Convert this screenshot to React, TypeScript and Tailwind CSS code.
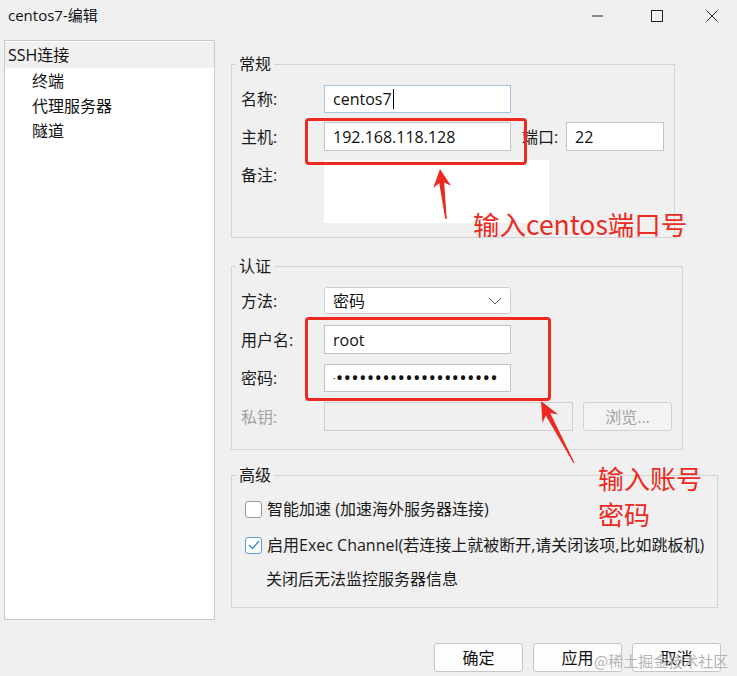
import React from "react";

const font = "font-['Open_Sans','Noto_Sans_CJK_SC',sans-serif]";

function Row({ label, children, className = "", dim = false }: { label: string; children: React.ReactNode; className?: string; dim?: boolean }) {
  return (
    <div className={`flex items-center ${className}`}>
      <div className={`w-[83px] shrink-0 ${dim ? "text-[#a3a3a3]" : "text-[#1a1a1a]"}`}>{label}</div>
      {children}
    </div>
  );
}

function Group({ title, className = "", children }: { title: string; className?: string; children: React.ReactNode }) {
  return (
    <fieldset className={`border border-[#d3d3d3] ${className}`}>
      <legend className="ml-[4px] px-[3px] leading-[20px] text-[#1a1a1a]">{title}</legend>
      {children}
    </fieldset>
  );
}

export default function App() {
  const dots = "•".repeat(21);
  return (
    <div className={`relative h-[676px] w-[737px] overflow-hidden bg-[#f0f0f0] text-[16px] ${font}`}>
      {/* 标题栏 */}
      <div className="flex h-[31px] items-center">
        <div className="pl-[8px] text-[15px] text-[#111]">centos7-编辑</div>
        <div className="ml-auto flex h-full items-center">
          <div className="flex w-[60px] justify-center">
            <svg width="11" height="11" viewBox="0 0 11 11"><path d="M0 6h11" stroke="#222" strokeWidth="1" /></svg>
          </div>
          <div className="flex w-[60px] justify-center">
            <svg width="12" height="12" viewBox="0 0 12 12"><rect x="0.5" y="0.5" width="11" height="11" fill="none" stroke="#222" /></svg>
          </div>
          <div className="flex w-[50px] justify-center">
            <svg width="12" height="12" viewBox="0 0 12 12"><path d="M0.5 0.5L11.5 11.5M11.5 0.5L0.5 11.5" stroke="#222" strokeWidth="1" /></svg>
          </div>
        </div>
      </div>

      <div className="flex pl-[4px] pt-[9px]">
        {/* 左侧树 */}
        <div className="h-[580px] w-[211px] border border-[#c9c9c9] bg-white pt-[1px]">
          <div className="flex h-[26px] items-center bg-[#f0f0f0] pl-[3px] text-[#111]">SSH连接</div>
          {["终端", "代理服务器", "隧道"].map((t) => (
            <div key={t} className="flex h-[25px] items-center pl-[27px] text-[#111]">{t}</div>
          ))}
        </div>

        {/* 右侧表单 */}
        <div className="ml-[16px] flex w-[490px] flex-col">
          <Group title="常规" className="mt-[14px] w-[444px]">
            <div className="pb-[14px] pl-[9px] pt-[11px]">
              <Row label="名称:">
                <div className="flex h-[28px] w-[187px] items-center border border-[#a9c3de] bg-white px-[8px] text-[#111]">
                  centos7<span className="ml-[1px] h-[20px] w-px bg-black" />
                </div>
              </Row>
              <Row label="主机:" className="mt-[9px]">
                <div className="flex h-[29px] w-[187px] items-center border border-[#c4c4c4] bg-white px-[8px] text-[#111]">192.168.118.128</div>
                <div className="ml-[11px] w-[44px] text-[#1a1a1a]">端口:</div>
                <div className="flex h-[29px] w-[98px] items-center border border-[#c4c4c4] bg-white px-[8px] text-[#111]">22</div>
              </Row>
              <div className="mt-[9px] flex">
                <div className="mt-[3px] w-[83px] text-[#1a1a1a]">备注:</div>
                <div className="h-[63px] w-[225px] bg-white" />
              </div>
            </div>
          </Group>

          <Group title="认证" className="mt-[18px] w-[452px]">
            <div className="pb-[18px] pl-[9px] pt-[11px]">
              <Row label="方法:">
                <div className="flex h-[27px] w-[187px] items-center justify-between rounded-[3px] border border-[#cdcdcd] bg-white pl-[8px] pr-[8px] text-[#111]">
                  密码
                  <svg width="14" height="8" viewBox="0 0 14 8"><path d="M1 1l6 6 6-6" fill="none" stroke="#555" strokeWidth="1" /></svg>
                </div>
              </Row>
              <Row label="用户名:" className="mt-[11px]">
                <div className="flex h-[29px] w-[187px] items-center border border-[#c4c4c4] bg-white px-[8px] text-[#111]">root</div>
              </Row>
              <Row label="密码:" className="mt-[10px]">
                <div className="flex h-[28px] w-[187px] items-center overflow-hidden whitespace-nowrap border border-[#c4c4c4] bg-white pl-[8px] text-[20px] leading-none tracking-[0.2px] text-[#111]">
                  <span className="text-[10px]">·</span>{dots}
                </div>
              </Row>
              <Row label="私钥:" className="mt-[10px]" dim>
                <div className="h-[29px] w-[249px] border border-[#cfcfcf] bg-[#f0f0f0]" />
                <div className="ml-[10px] flex h-[29px] w-[89px] items-center justify-center rounded-[3px] border border-[#d2d2d2] bg-[#f3f3f3] text-[#a3a3a3]">浏览...</div>
              </Row>
            </div>
          </Group>

          <Group title="高级" className="mt-[15px] w-[487px]">
            <div className="pb-[16px] pl-[13px] pt-[12px] text-[#1a1a1a]">
              <div className="flex h-[24px] items-center">
                <div className="h-[17px] w-[17px] rounded-[3px] border border-[#9a9a9a] bg-white" />
                <span className="ml-[5px]">智能加速 (加速海外服务器连接)</span>
              </div>
              <div className="mt-[12px] flex h-[24px] items-center">
                <div className="flex h-[17px] w-[17px] items-center justify-center rounded-[3px] border border-[#5f9ad6] bg-white">
                  <svg width="12" height="10" viewBox="0 0 12 10"><path d="M1 5l3.5 3.5L11 1" fill="none" stroke="#3f86d3" strokeWidth="1.4" /></svg>
                </div>
                <span className="ml-[5px] whitespace-nowrap">启用Exec Channel(若连接上就被断开,请关闭该项,比如跳板机)</span>
              </div>
              <div className="mt-[10px] flex h-[24px] items-center pl-[21px]">关闭后无法监控服务器信息</div>
            </div>
          </Group>

          <div className="mt-[35px] flex justify-end gap-[10px]">
            {["确定", "应用", "取消"].map((t) => (
              <div key={t} className="flex h-[29px] w-[89px] items-center justify-center rounded-[3px] border border-[#c6c6c6] bg-[#fdfdfd] text-[#111]">{t}</div>
            ))}
          </div>
        </div>
      </div>

      {/* 标注 */}
      <div className="absolute left-[305px] top-[118px] h-[47px] w-[222px] rounded-[4px] border-[3px] border-[#ec2a21]" />
      <div className="absolute left-[305px] top-[317px] h-[84px] w-[246px] rounded-[4px] border-[3px] border-[#ec2a21]" />
      <svg className="pointer-events-none absolute inset-0" width="737" height="676" viewBox="0 0 737 676">
        <polygon fill="#ec2a21" points="440,169 451,185.8 444.2,182.6 446.7,218.9 445.3,219.1 439.2,183.2 433.2,188" />
        <polygon fill="#ec2a21" points="541,401 558.3,414.5 550.2,413 574.5,462.7 573.5,463.3 545.8,415.4 542.5,422.9" />
      </svg>
      <div className="absolute left-[473px] top-[207px] font-['Noto_Sans_CJK_SC',sans-serif] text-[26.5px] leading-[34px] text-[#ec2a21]">输入centos端口号</div>
      <div className="absolute left-[598px] top-[460px] font-['Noto_Sans_CJK_SC',sans-serif] text-[26px] leading-[36px] text-[#ec2a21]">
        输入账号<br />密码
      </div>
      <div className="absolute left-[594px] top-[651px] font-['Noto_Sans_CJK_SC',sans-serif] text-[15px] leading-[20px] text-[#b4b4b4]">@稀土掘金技术社区</div>
    </div>
  );
}
